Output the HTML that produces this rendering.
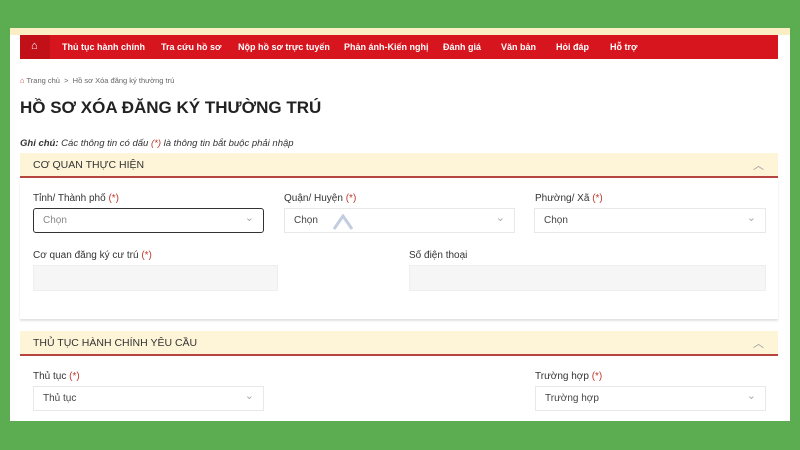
<!DOCTYPE html>
<html><head><meta charset="utf-8"><style>
*{margin:0;padding:0;box-sizing:border-box}
body{width:800px;height:450px;background:#5cac52;position:relative;overflow:hidden;font-family:"Liberation Sans",sans-serif;color:#222}
.a{position:absolute}
.page{left:10px;top:28px;width:780px;height:393px;background:#fff}
.cream{left:10px;top:28px;width:780px;height:7px;background:#fbeec4}
.nav{left:20px;top:35px;width:758px;height:24px;background:#d7151e;color:#fff;font-size:9px;font-weight:bold}
.nav span{position:absolute;top:7px}
.home{left:0;top:0;width:30px;height:24px;background:#c21018}
.bc{font-size:7.5px;color:#666;left:20px;top:76px}
h1{position:absolute;left:20px;top:98px;font-size:17px;font-weight:bold;color:#222}
.note{left:20px;top:138px;font-size:9.5px;font-style:italic;color:#333}
.r{color:#c0392b}
.band{left:20px;width:758px;height:25px;background:#fef5d8;border-bottom:2px solid #b5453e;font-size:10.5px;color:#333}
.band .t{position:absolute;left:13px;top:6px}
.band .c{position:absolute;right:14px;top:4px;color:#999;font-size:11px}
.lbl{font-size:10px;color:#333}
.sel{height:25px;border:1px solid #e8e8e8;background:#fff;font-size:10px;color:#444;padding:6px 0 0 9px}
.sel:after{content:"⌄";position:absolute;right:9px;top:2px;color:#aaa;font-size:11px}
.inp{height:26px;background:#f6f6f6;border:1px solid #eee}
.panel{left:20px;top:178px;width:758px;height:141px;box-shadow:0 2px 2px rgba(0,0,0,.12)}
</style></head><body>
<div class="a page"></div>
<div class="a cream"></div>
<div class="a panel"></div>
<div class="a nav">
<div class="a home"><span style="left:11px;top:5px;font-size:11px">⌂</span></div>
<span style="left:42px">Thủ tục hành chính</span>
<span style="left:141px">Tra cứu hồ sơ</span>
<span style="left:218px">Nộp hồ sơ trực tuyến</span>
<span style="left:324px">Phản ánh-Kiến nghị</span>
<span style="left:423px">Đánh giá</span>
<span style="left:481px">Văn bản</span>
<span style="left:536px">Hỏi đáp</span>
<span style="left:590px">Hỗ trợ</span>
</div>
<div class="a bc"><span style="color:#c0392b">⌂</span> Trang chủ &nbsp;&gt;&nbsp; Hồ sơ Xóa đăng ký thường trú</div>
<h1>HỒ SƠ XÓA ĐĂNG KÝ THƯỜNG TRÚ</h1>
<div class="a note"><b>Ghi chú:</b> Các thông tin có dấu <span class="r">(*)</span> là thông tin bắt buộc phải nhập</div>
<div class="a band" style="top:153px"><span class="t">CƠ QUAN THỰC HIỆN</span><span class="c">︿</span></div>
<div class="a lbl" style="left:33px;top:193px">Tỉnh/ Thành phố <span class="r">(*)</span></div>
<div class="a lbl" style="left:284px;top:193px">Quận/ Huyện <span class="r">(*)</span></div>
<div class="a lbl" style="left:535px;top:193px">Phường/ Xã <span class="r">(*)</span></div>
<div class="a sel" style="left:33px;top:208px;width:231px;border:1.5px solid #333;border-radius:3px;color:#888">Chọn</div>
<div class="a sel" style="left:284px;top:208px;width:231px">Chọn</div>
<svg class="a" style="left:332px;top:214px" width="22" height="16"><path d="M2 15 L11 2 L20 15" fill="none" stroke="#c3cde0" stroke-width="3"/></svg>
<div class="a sel" style="left:534px;top:208px;width:232px">Chọn</div>
<div class="a lbl" style="left:33px;top:250px">Cơ quan đăng ký cư trú <span class="r">(*)</span></div>
<div class="a lbl" style="left:409px;top:250px">Số điện thoại</div>
<div class="a inp" style="left:33px;top:265px;width:245px"></div>
<div class="a inp" style="left:409px;top:265px;width:357px"></div>
<div class="a band" style="top:331px"><span class="t">THỦ TỤC HÀNH CHÍNH YÊU CẦU</span><span class="c">︿</span></div>
<div class="a lbl" style="left:33px;top:371px">Thủ tục <span class="r">(*)</span></div>
<div class="a lbl" style="left:535px;top:371px">Trường hợp <span class="r">(*)</span></div>
<div class="a sel" style="left:33px;top:386px;width:231px">Thủ tục</div>
<div class="a sel" style="left:535px;top:386px;width:231px">Trường hợp</div>
</body></html>
